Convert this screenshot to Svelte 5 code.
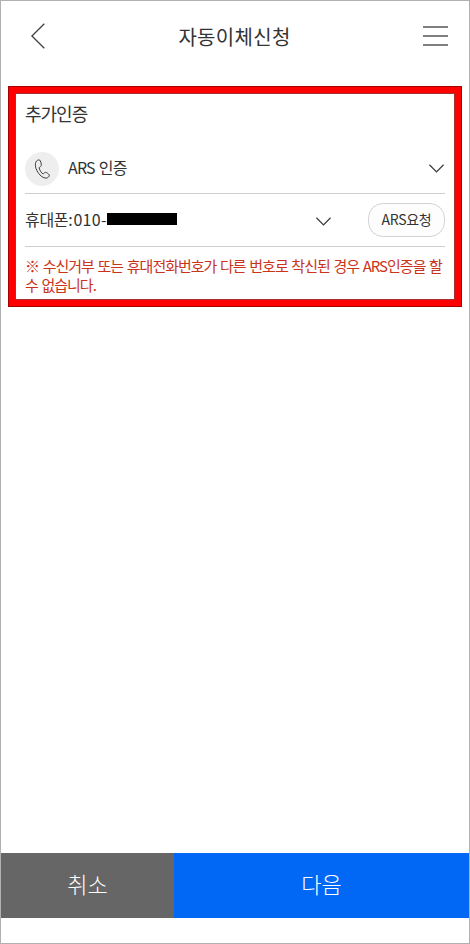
<script lang="ts">
  let method = $state("ARS 인증");
  let phonePrefix = $state("010-");
</script>

{#snippet chevron()}
  <svg class="chevron" viewBox="0 0 15 9" aria-hidden="true">
    <path d="M0.4 0.8 L7.5 7.9 L14.6 0.8" />
  </svg>
{/snippet}

<div class="screen">
  <header>
    <button class="icon-button" aria-label="뒤로">
      <svg class="back" viewBox="0 0 14 26" aria-hidden="true">
        <path d="M13.3 0.7 L0.9 13 L13.3 25.3" />
      </svg>
    </button>
    <h1>자동이체신청</h1>
    <button class="icon-button" aria-label="메뉴">
      <svg class="menu" viewBox="0 0 25 20" aria-hidden="true">
        <path d="M0 1 H25 M0 10 H25 M0 19 H25" />
      </svg>
    </button>
  </header>

  <main>
    <section class="auth">
      <div class="auth-inner">
        <h2>추가인증</h2>

        <div class="row method">
          <span class="phone-icon">
            <svg viewBox="0 0 34 34" aria-hidden="true">
              <path
                d="M14.7 8.1 C13.5 7.4 11.4 8.6 10.8 10.2 C9.4 14.1 11.7 19.6 15 23 C17.3 25.4 20.4 26.8 22.5 25.8 C23.8 25.1 24.6 23.7 24.1 22.8 C23.6 21.8 21.3 20.2 20.4 20.3 C19.5 20.4 18.9 21.9 18 21.8 C16.5 21.5 14 17.1 14.2 15.7 C14.4 14.8 16 14.6 16.3 13.5 C16.6 12.3 15.6 8.7 14.7 8.1 Z"
              />
            </svg>
          </span>
          <span class="method-name">{method}</span>
          {@render chevron()}
        </div>

        <div class="row phone">
          <div class="number">
            <span class="prefix">휴대폰:<span class="digits">{phonePrefix}</span></span>
            <span class="mask"></span>
            {@render chevron()}
          </div>
          <button class="request">ARS요청</button>
        </div>

        <p class="notice">
          <span class="line">※ 수신거부 또는 휴대전화번호가 다른 번호로 착신된 경우 ARS인증을 할</span>
          <span class="line">수 없습니다.</span>
        </p>
      </div>
    </section>
  </main>

  <footer>
    <button class="cancel">취소</button>
    <button class="next">다음</button>
  </footer>
</div>

<style>
  .screen {
    display: flex;
    flex-direction: column;
    box-sizing: border-box;
    width: 470px;
    height: 944px;
    padding-bottom: 25px;
    border: 1px solid #b1b1b1;
    background: #ffffff;
    color: #333333;
    font-family: "Noto Sans CJK KR", sans-serif;
  }

  button {
    padding: 0;
    border: 0;
    background: none;
    color: inherit;
    font-family: inherit;
  }

  svg {
    display: block;
    flex: none;
    fill: none;
    stroke: #3c3c3c;
  }

  header {
    display: flex;
    align-items: center;
    justify-content: space-between;
    box-sizing: border-box;
    height: 70px;
    padding: 0 21px 0 30px;
  }

  .back {
    width: 14px;
    height: 26px;
    stroke-width: 1.3;
  }

  .menu {
    width: 25px;
    height: 20px;
    stroke: #555555;
    stroke-width: 1.3;
  }

  h1,
  h2,
  p {
    margin: 0;
    font-weight: 400;
  }

  h1 {
    padding: 2px 0 0 1px;
    font-size: 20px;
    line-height: 30px;
    letter-spacing: 0.3px;
  }

  main {
    flex: 1;
    padding: 15px 7px 0;
  }

  .auth {
    box-sizing: border-box;
    height: 221px;
    padding: 6px;
    border: 1px solid #a80000;
    background: #ff0000;
  }

  .auth-inner {
    box-sizing: border-box;
    height: 207px;
    padding: 0 9px;
    border: 1px solid #a83030;
    background: #ffffff;
  }

  h2 {
    height: 50px;
    font-size: 18px;
    line-height: 39px;
    letter-spacing: -1px;
  }

  .row {
    display: flex;
    align-items: center;
    box-sizing: border-box;
    border-bottom: 1px solid #d0d0d0;
  }

  .chevron {
    width: 15px;
    height: 9px;
    margin-right: 1px;
    margin-left: auto;
    stroke-width: 1.3;
  }

  .method {
    height: 50px;
    font-size: 16px;
  }

  .phone-icon {
    width: 34px;
    height: 34px;
    border-radius: 50%;
    background: #eeeeee;
  }

  .phone-icon svg {
    width: 34px;
    height: 34px;
    stroke-width: 1;
  }

  .method-name {
    margin-left: 9px;
    padding-bottom: 3px;
    letter-spacing: -0.8px;
    word-spacing: 1.2px;
  }

  .phone {
    height: 53px;
    font-size: 16px;
  }

  .number {
    display: flex;
    align-items: center;
    width: 307px;
  }

  .number .chevron {
    margin-top: 2px;
  }

  .prefix {
    width: 82px;
    padding-bottom: 2px;
    letter-spacing: -0.3px;
    white-space: nowrap;
  }

  .digits {
    margin-left: 1px;
    letter-spacing: 0.3px;
  }

  .mask {
    width: 70px;
    height: 12px;
    margin-bottom: 2px;
    background: #000000;
  }

  .request {
    box-sizing: border-box;
    width: 77px;
    height: 34px;
    padding-bottom: 2px;
    margin-left: auto;
    border: 1px solid #d3d3d3;
    border-radius: 15px;
    background: #fdfdfd;
    font-size: 14px;
    letter-spacing: -0.3px;
  }

  .notice {
    padding-top: 9px;
    color: #c9341a;
    font-size: 15px;
    line-height: 19px;
    letter-spacing: -1px;
    word-spacing: 1.3px;
  }

  .line {
    display: block;
    white-space: nowrap;
  }

  footer {
    display: flex;
    height: 65px;
  }

  footer button {
    padding-bottom: 6px;
    color: #ffffff;
    font-size: 22px;
    font-weight: 300;
  }

  .cancel {
    width: 173px;
    background: #666666;
  }

  .next {
    flex: 1;
    background: #0068f5;
  }
</style>
